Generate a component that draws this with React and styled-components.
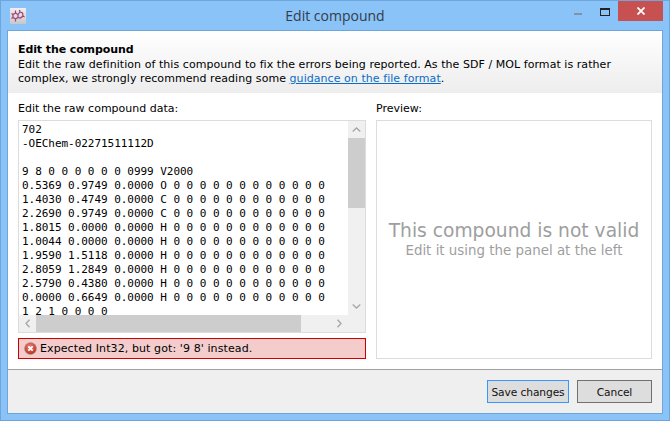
import React from "react";
import styled, { createGlobalStyle } from "styled-components";

const Global = createGlobalStyle`
  html, body { margin: 0; padding: 0; background: #8ac3f8; overflow: hidden; }
  * { box-sizing: border-box; }
`;
const Win = styled.div`
  width: 670px; height: 421px; background: #8ac3f8; border: 1px solid #6ea6dc;
  display: flex; flex-direction: column; font-family: "DejaVu Sans", sans-serif; font-size: 11px; color: #000;
`;
const TitleBar = styled.div`
  height: 29px; flex: none; display: flex; align-items: flex-start; position: relative; padding-left: 9px;
`;
const AppIcon = styled.div`
  width: 16px; height: 16px; margin-top: 7px;
  background: linear-gradient(#f2eef0, #c9c7c9);
  display: flex;
`;
const Title = styled.div`
  position: absolute; left: 0; right: 0; top: 6px; text-align: center; font-size: 14px; line-height: 18px; color: #333c48;
  font-family: "Open Sans", "DejaVu Sans", sans-serif;
`;
const Controls = styled.div`
  position: absolute; right: 6px; top: 0; display: flex; align-items: flex-start;
`;
const MinBtn = styled.div`
  width: 8px; height: 2px; background: #7f93a8; margin: 12px 18px 0 0;
`;
const MaxBtn = styled.div`
  width: 10px; height: 8px; border: 1px solid #222; border-top-width: 2px; margin: 7px 8px 0 0;
`;
const CloseBtn = styled.div`
  width: 45px; height: 20px; background: #c75050; display: flex; align-items: center; justify-content: center;
`;
const Client = styled.div`
  flex: 1; margin: 0 6px 6px 6px; border: 1px solid #6ea6dc; background: #fff; display: flex; flex-direction: column; min-height: 0;
`;
const Header = styled.div`
  height: 62px; flex: none; background: linear-gradient(#fff, #ededed); padding: 11px 10px 0 10px; line-height: 14px; letter-spacing: 0.055px;
`;
const HeaderTitle = styled.div` font-weight: bold; line-height: 16px; letter-spacing: -0.1px; `;
const Link = styled.a` color: #0a6cc8; text-decoration: underline; `;
const Body = styled.div`
  flex: 1; display: grid; grid-template-columns: 348px 276px; column-gap: 10px; padding: 9px 10px 10px 10px; min-height: 0;
  border-bottom: 1px solid #a0a0a0;
`;
const Column = styled.div` display: flex; flex-direction: column; min-height: 0; `;
const Label = styled.div` line-height: 14px; height: 18px; `;
const Editor = styled.div`
  height: 213px; flex: none; border: 1px solid #dcdcdc; display: grid; grid-template-columns: 1fr 17px; grid-template-rows: 1fr 17px; overflow: hidden;
`;
const Code = styled.pre`
  margin: 0; padding: 2px 0 0 3px; overflow: hidden; font-family: "DejaVu Sans Mono", monospace; font-size: 11px; line-height: 14px; letter-spacing: -0.04px; color: #000;
`;
const VBar = styled.div`
  background: #f0f0f0; display: flex; flex-direction: column;
`;
const HBar = styled.div`
  background: #f0f0f0; display: flex;
`;
const Corner = styled.div` background: #f0f0f0; `;
const Arrow = styled.div`
  width: 17px; height: 17px; flex: none; display: flex; align-items: center; justify-content: center;
`;
const VThumb = styled.div` width: 17px; height: 70px; background: #cdcdcd; flex: none; `;
const Track = styled.div` flex: 1; `;
const HThumb = styled.div` width: 265px; height: 17px; background: #cdcdcd; flex: none; `;
const ErrorBox = styled.div`
  height: 21px; margin-top: 5px; border: 1px solid #cc0000; background: #f4cccc; display: flex; align-items: center; padding-left: 5px; gap: 3px; white-space: nowrap; letter-spacing: 0.1px;
`;
const Preview = styled.div`
  height: 239px; flex: none; border: 1px solid #dcdcdc; display: flex; flex-direction: column; align-items: center; justify-content: center; color: #9e9e9e;
`;
const PreviewBig = styled.div` font-size: 18.67px; line-height: 22px; `;
const PreviewSmall = styled.div` font-size: 13.4px; line-height: 17px; `;
const Footer = styled.div`
  height: 43px; flex: none; background: #efefef; display: flex; justify-content: flex-end; align-items: flex-start; padding: 10px 10px 0 0; gap: 8px;
`;
const Button = styled.div`
  height: 23px; width: ${p => p.$w}px; display: flex; align-items: center; justify-content: center; background: #dddddd; padding-top: 1px;
  border: 1px solid ${p => (p.$primary ? "#3399ff" : "#707070")}; color: #111; font-size: 10.67px; letter-spacing: -0.1px;
`;

const code = `702
-OEChem-02271511112D

9 8 0 0 0 0 0 0 0999 V2000
0.5369 0.9749 0.0000 O 0 0 0 0 0 0 0 0 0 0 0 0
1.4030 0.4749 0.0000 C 0 0 0 0 0 0 0 0 0 0 0 0
2.2690 0.9749 0.0000 C 0 0 0 0 0 0 0 0 0 0 0 0
1.8015 0.0000 0.0000 H 0 0 0 0 0 0 0 0 0 0 0 0
1.0044 0.0000 0.0000 H 0 0 0 0 0 0 0 0 0 0 0 0
1.9590 1.5118 0.0000 H 0 0 0 0 0 0 0 0 0 0 0 0
2.8059 1.2849 0.0000 H 0 0 0 0 0 0 0 0 0 0 0 0
2.5790 0.4380 0.0000 H 0 0 0 0 0 0 0 0 0 0 0 0
0.0000 0.6649 0.0000 H 0 0 0 0 0 0 0 0 0 0 0 0
1 2 1 0 0 0 0`;

const Chev = ({ d }) => (
  <svg width="9" height="7" viewBox="0 0 9 7" fill="none" stroke="#a6a6a6" strokeWidth="1.3"><path d={d} /></svg>
);
const ChevH = ({ d }) => (
  <svg width="7" height="9" viewBox="0 0 7 9" fill="none" stroke="#a6a6a6" strokeWidth="1.3"><path d={d} /></svg>
);

export default function App() {
  return (
    <Win>
      <Global />
      <TitleBar>
        <AppIcon>
          <svg width="16" height="16" viewBox="0 0 16 16" fill="none" stroke="#9c3f78" strokeWidth="1.2">
            <path d="M3 6.5 5.5 5 8 6.5V9.5L5.5 11 3 9.5ZM8 6.5 10 4 12.5 5 13 8 10.5 10 8 9.5M5.5 5V2.5M5.5 11v2.5M3 6.5 1.5 5.5M3 9.5 1.5 10.5M10 4 9.5 2M13 8 14.5 9" />
          </svg>
        </AppIcon>
        <Title>Edit compound</Title>
        <Controls>
          <MinBtn />
          <MaxBtn />
          <CloseBtn>
            <svg width="8" height="8" viewBox="0 0 8 8" stroke="#fff" strokeWidth="1.8"><path d="M.5.5 7.5 7.5M7.5.5.5 7.5" /></svg>
          </CloseBtn>
        </Controls>
      </TitleBar>
      <Client>
        <Header>
          <HeaderTitle>Edit the compound</HeaderTitle>
          Edit the raw definition of this compound to fix the errors being reported. As the SDF / MOL format is rather
          <br />
          complex, we strongly recommend reading some <Link>guidance on the file format</Link>.
        </Header>
        <Body>
          <Column>
            <Label>Edit the raw compound data:</Label>
            <Editor>
              <Code>{code}</Code>
              <VBar>
                <Arrow><Chev d="M.7 5.5 4.5 2l3.8 3.5" /></Arrow>
                <VThumb />
                <Track />
                <Arrow><Chev d="M.7 1.5 4.5 5l3.8-3.5" /></Arrow>
              </VBar>
              <HBar>
                <Arrow><ChevH d="M5.5.7 2 4.5l3.5 3.8" /></Arrow>
                <HThumb />
                <Track />
                <Arrow><ChevH d="M1.5.7 5 4.5 1.5 8.3" /></Arrow>
              </HBar>
              <Corner />
            </Editor>
            <ErrorBox>
              <svg width="13" height="13" viewBox="0 0 13 13">
                <defs>
                  <radialGradient id="err" cx="45%" cy="35%" r="70%">
                    <stop offset="0" stopColor="#f08070" />
                    <stop offset="1" stopColor="#b52a1c" />
                  </radialGradient>
                </defs>
                <circle cx="6.5" cy="6.5" r="6" fill="url(#err)" stroke="#a8a0a0" strokeWidth=".6" />
                <path d="M4.3 4.3 8.7 8.7M8.7 4.3 4.3 8.7" stroke="#fff" strokeWidth="1.8" />
              </svg>
              <span>Expected Int32, but got: '9 8' instead.</span>
            </ErrorBox>
          </Column>
          <Column>
            <Label>Preview:</Label>
            <Preview>
              <PreviewBig>This compound is not valid</PreviewBig>
              <PreviewSmall>Edit it using the panel at the left</PreviewSmall>
            </Preview>
          </Column>
        </Body>
        <Footer>
          <Button $w={82} $primary>Save changes</Button>
          <Button $w={75}>Cancel</Button>
        </Footer>
      </Client>
    </Win>
  );
}
